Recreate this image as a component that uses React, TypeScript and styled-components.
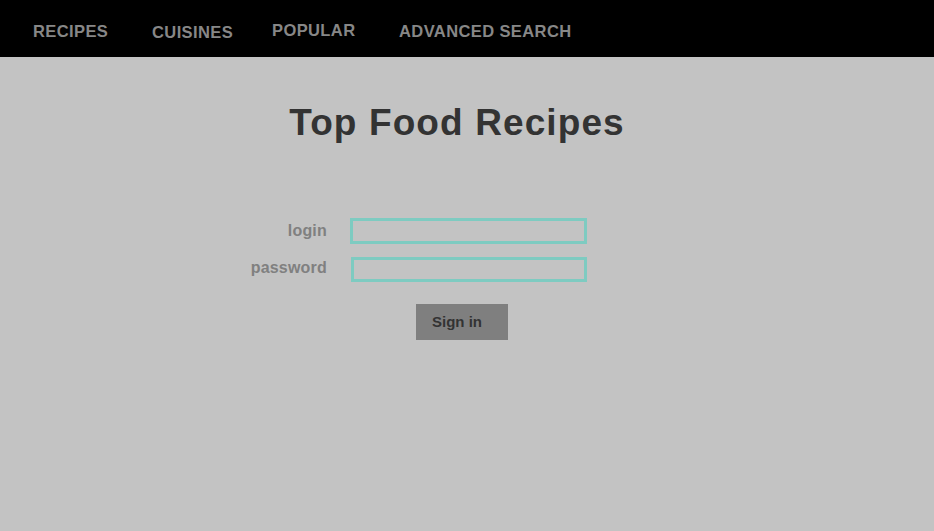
import React from 'react';
import styled, { createGlobalStyle } from 'styled-components';

const GlobalStyle = createGlobalStyle`
  html, body {
    margin: 0;
    padding: 0;
    background: #c3c3c3;
    font-family: "Liberation Sans", Arial, sans-serif;
  }
  #root {
    min-height: 100vh;
  }
`;

const NavBar = styled.nav`
  height: 57px;
  background: #000;
  display: flex;
  align-items: center;
  padding-left: 33px;
`;

const NavItem = styled.a<{ $shift?: number; $w?: number }>`
  flex: 0 0 ${(p) => (p.$w ? `${p.$w}px` : 'auto')};
  color: #878787;
  font-size: 16.5px;
  font-weight: bold;
  letter-spacing: 0.4px;
  text-decoration: none;
  line-height: 20px;
  margin-top: ${(p) => p.$shift ?? 4}px;
`;

const Title = styled.h1`
  margin: 44px 0 0;
  text-align: center;
  font-size: 37px;
  line-height: 44px;
  letter-spacing: 1.1px;
  font-weight: bold;
  color: #333;
  padding-right: 20px;
`;

const FormGrid = styled.form`
  margin: 73px 0 0 calc(50% - 240px);
  display: grid;
  grid-template-columns: 100px 237px;
  column-gap: 23px;
  row-gap: 13px;
  align-items: center;
`;

const Label = styled.label<{ $shift: number }>`
  text-align: right;
  font-size: 16px;
  font-weight: bold;
  letter-spacing: 0.2px;
  color: #808080;
  margin-top: ${(p) => p.$shift}px;
`;

const Input = styled.input<{ $h: number; $dx?: number }>`
  box-sizing: border-box;
  width: ${(p) => 237 - (p.$dx ?? 0)}px;
  height: ${(p) => p.$h}px;
  margin-left: ${(p) => p.$dx ?? 0}px;
  border: 3px solid #7ecbc1;
  background: transparent;
  outline: none;
  padding: 0 6px;
`;

const SignIn = styled.button`
  display: block;
  box-sizing: border-box;
  width: 92px;
  height: 36px;
  margin: 22px 0 0 calc(50% - 51px);
  padding: 0 0 1px 16px;
  text-align: left;
  border: none;
  background: #7f7f7f;
  color: #333;
  font-family: "Liberation Sans", Arial, sans-serif;
  font-size: 15px;
  font-weight: bold;
  line-height: 35px;
`;

export default function App() {
  return (
    <>
      <GlobalStyle />
      <NavBar>
        <NavItem href="#" $w={119}>RECIPES</NavItem>
        <NavItem href="#" $w={120} $shift={6}>CUISINES</NavItem>
        <NavItem href="#" $w={127} $shift={2}>POPULAR</NavItem>
        <NavItem href="#">ADVANCED SEARCH</NavItem>
      </NavBar>
      <Title>Top Food Recipes</Title>
      <FormGrid onSubmit={(e) => e.preventDefault()}>
        <Label htmlFor="login" $shift={0}>login</Label>
        <Input id="login" $h={26} />
        <Label htmlFor="password" $shift={-3}>password</Label>
        <Input id="password" type="password" $h={25} $dx={1} />
      </FormGrid>
      <SignIn type="button">Sign in</SignIn>
    </>
  );
}
